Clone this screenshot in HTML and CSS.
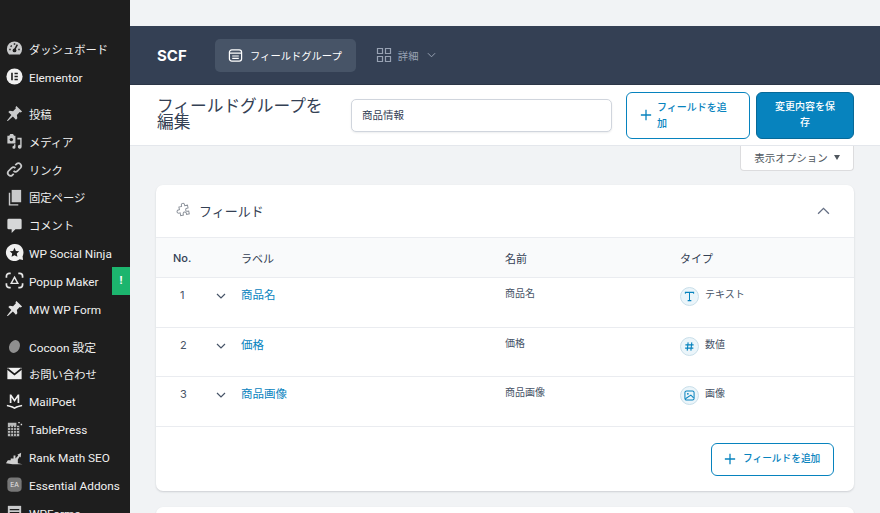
FILE: index.html
```html
<!DOCTYPE html>
<html lang="ja">
<head>
<meta charset="utf-8">
<title>フィールドグループを編集</title>
<link rel="stylesheet" href="styles.css">
</head>
<body>
<div class="app">
  <aside class="sidebar">
    <ul class="menu">
      <li class="item jp"><svg class="mi" viewBox="0 0 20 20"><path d="M10 2.500a8 8 0 0 0-8 8c0 2.200.9 4.200 2.300 5.700h11.400A8 8 0 0 0 18 10.500a8 8 0 0 0-8-8z" fill="#c9cacb"/><path d="M10 11.500 13 6M4.500 11h1.500M14 11h1.500M6 7l1 1M10 4.500V6" stroke="#1e1e1e" stroke-width="1.600"/><circle cx="10" cy="12" r="2" fill="#1e1e1e"/></svg><span>ダッシュボード</span></li>
      <li class="item"><svg class="mi" viewBox="0 0 20 20"><circle cx="10" cy="10" r="8.500" fill="#f0f0f0"/><path d="M6.500 6h1.700v8H6.500zM10 6h3.500v1.600H10zM10 9.200h3.500v1.600H10zM10 12.400h3.500V14H10z" fill="#1e1e1e"/></svg><span>Elementor</span></li>
      <li class="item sep jp"><svg class="mi" viewBox="0 0 20 20"><path d="M12 2l6 6-1.500 1-1-.5-3 3 .5 3.500-1.500 1.500-3.200-3.300L3 18l-1-.5 4.700-5.800L3.500 8.500 5 7l3.500.5 3-3-.5-1z" fill="#c9cacb"/></svg><span>投稿</span></li>
      <li class="item jp"><svg class="mi" viewBox="0 0 20 20"><path d="M2.500 4h2l1-2h3l1 2h1.500v8h-8.500z" fill="#c9cacb"/><circle cx="6.700" cy="8" r="1.800" fill="#1e1e1e"/><path d="M13 6h4.500v9.500a2 2 0 1 1-1.500-1.900V8H13z M11 13v3a1.600 1.600 0 1 1-1.500-1.600V13z" fill="#c9cacb"/></svg><span>メディア</span></li>
      <li class="item jp"><svg class="mi" viewBox="0 0 20 20"><path d="M9 11.500a3 3 0 0 0 4.200 0l3.300-3.300a3 3 0 0 0-4.200-4.200L10.800 5.500M11 8.500a3 3 0 0 0-4.200 0L3.500 11.800a3 3 0 0 0 4.200 4.200l1.500-1.500" fill="none" stroke="#c9cacb" stroke-width="1.800"/></svg><span>リンク</span></li>
      <li class="item jp"><svg class="mi" viewBox="0 0 20 20"><path d="M7 2h10v13H7z" fill="#c9cacb"/><path d="M4 5h1.500v12H14v1.500H4z" fill="#c9cacb"/></svg><span>固定ページ</span></li>
      <li class="item jp"><svg class="mi" viewBox="0 0 20 20"><path d="M4 3h12a1.500 1.500 0 0 1 1.500 1.500v8A1.500 1.500 0 0 1 16 14h-5l-4 4v-4H4a1.500 1.500 0 0 1-1.500-1.500v-8A1.500 1.500 0 0 1 4 3z" fill="#d6d7d8"/></svg><span>コメント</span></li>
      <li class="item"><svg class="mi" viewBox="0 0 20 20"><path d="M10 1a9 9 0 1 0 5.500 16.100L19 18l-.5-4A9 9 0 0 0 10 1z" fill="#f0f0f0"/><path d="M10 5l1.500 3.300 3.500.4-2.600 2.400.7 3.500L10 13l-3.100 1.600.7-3.500L5 8.700l3.500-.4z" fill="#1e1e1e"/></svg><span>WP Social Ninja</span></li>
      <li class="item"><svg class="mi" viewBox="0 0 20 20"><path d="M6 2.500H4.500a3 3 0 0 0-3 3V7M14 2.500h1.500a3 3 0 0 1 3 3V7M6 17.500H4.500a3 3 0 0 1-3-3V13M14 17.500h1.500a3 3 0 0 0 3-3V13" fill="none" stroke="#e8e8e8" stroke-width="1.800"/><path d="M10 6.500l3.500 6.500H6.500z" fill="none" stroke="#e8e8e8" stroke-width="1.500"/></svg><span>Popup Maker</span><b class="badge">!</b></li>
      <li class="item"><svg class="mi" viewBox="0 0 20 20"><path d="M12 2l6 6-1.500 1-1-.5-3 3 .5 3.500-1.500 1.500-3.200-3.300L3 18l-1-.5 4.700-5.800L3.500 8.500 5 7l3.500.5 3-3-.5-1z" fill="#e2e2e2"/></svg><span>MW WP Form</span></li>
      <li class="item sep"><svg class="mi" viewBox="0 0 20 20"><ellipse cx="10" cy="11" rx="5.500" ry="7" transform="rotate(25 10 11)" fill="#8f8f8f"/></svg><span>Cocoon 設定</span></li>
      <li class="item jp"><svg class="mi" viewBox="0 0 20 20"><path d="M2.500 4h15v12h-15z" fill="#f0f0f0"/><path d="M2.500 5l7.500 6 7.500-6" fill="none" stroke="#1e1e1e" stroke-width="1.800"/></svg><span>お問い合わせ</span></li>
      <li class="item"><svg class="mi" viewBox="0 0 20 20"><path d="M5 11.500V2.500h1.600L10 7.500l3.400-5H15v9h-1.800V5.800L10 10.500 6.800 5.800v5.700zM2 13.500c3 .5 5.500 1.200 8 2.500 2.500-1.300 5-2 8-2.500v1.500c-3 .5-5 1.200-8 3-3-1.800-5-2.500-8-3z" fill="#f0f0f0"/></svg><span>MailPoet</span></li>
      <li class="item"><svg class="mi" viewBox="0 0 20 20"><path d="M3 3h9v3h3v11H3z" fill="#b9baba"/><path d="M3 8h12M3 11h12M3 14h12M6 6v11M9 6v11M12 6v11" stroke="#1e1e1e" stroke-width=".9"/><path d="M14 2h1.500v1.500H14zM16.500 4H18v1.500h-1.500z" fill="#e2e2e2"/></svg><span>TablePress</span></li>
      <li class="item"><svg class="mi" viewBox="0 0 20 20"><path d="M1 16l2-3h3v-2h3V8h2v3l3-3-1-1 4-2-.500 5-1-1-2 3v4l5 1H8z" fill="#d0d0d0"/></svg><span>Rank Math SEO</span></li>
      <li class="item"><svg class="mi" viewBox="0 0 20 20"><rect x="2.500" y="2.500" width="15" height="15" rx="4" fill="#777"/><text x="10" y="13" text-anchor="middle" class="ea-text">EA</text></svg><span>Essential Addons</span></li>
      <li class="item"><svg class="mi" viewBox="0 0 20 20"><path d="M3 3h14v15H3z" fill="#c9cacb"/><path d="M5 7h10M5 10h10M5 13h10" stroke="#1e1e1e" stroke-width="1.200"/></svg><span>WPForms</span></li>
    </ul>
  </aside>

  <main class="main">
    <div class="adminbar-gap"></div>
    <nav class="topnav">
      <strong class="brand">SCF</strong>
      <a class="tab active"><svg class="tab-icon" viewBox="0 0 16 16"><rect x="1.500" y="2" width="13" height="12" rx="2.500" fill="none" stroke="currentColor" stroke-width="1.300"/><path d="M1.500 5.500h13M4.500 8.500h7M4.500 11h7" stroke="currentColor" stroke-width="1.200"/></svg>フィールドグループ</a>
      <a class="tab"><svg class="tab-icon large" viewBox="0 0 16 16"><path d="M1.500 1.500h5v5h-5zM9.500 1.500h5v5h-5zM1.500 9.500h5v5h-5zM9.500 9.500h5v5h-5z" fill="none" stroke="currentColor" stroke-width="1.200"/></svg>詳細<svg class="tab-caret" viewBox="0 0 10 6"><path d="M1 1l4 4 4-4" fill="none" stroke="currentColor" stroke-width="1.100"/></svg></a>
    </nav>

    <header class="titlebar">
      <h1 class="page-title">フィールドグループを編集</h1>
      <input class="title-input" type="text" value="商品情報">
      <a class="btn btn-outline header-add"><svg class="plus" viewBox="0 0 14 14"><path d="M7 1v12M1 7h12" stroke="currentColor" stroke-width="1.500"/></svg><span>フィールドを追加</span></a>
      <a class="btn btn-primary">変更内容を保存</a>
    </header>

    <div class="screen-options-row">
      <a class="screen-options">表示オプション<i class="tri"></i></a>
    </div>

    <section class="card">
      <div class="card-head">
        <svg class="puzzle" viewBox="0 0 20 20"><path d="M8 3.500a2 2 0 1 1 4 0V5h3.500v3.500H14a2 2 0 1 0 0 4h1.500V16H12v-1.500a2 2 0 1 0-4 0V16H4.500v-3.500H3a2 2 0 1 1 0-4h1.500V5H8z" transform="rotate(-12 10 10)" fill="none" stroke="#8a9099" stroke-width="1.200"/></svg>
        <h2 class="card-title">フィールド</h2>
        <svg class="collapse" viewBox="0 0 12 8"><path d="M1 7l5-5 5 5" fill="none" stroke="#667085" stroke-width="1.200"/></svg>
      </div>
      <div class="row row-head">
        <div class="c-no strong">No.</div><div class="c-arrow"></div><div class="c-label">ラベル</div><div class="c-name">名前</div><div class="c-type">タイプ</div>
      </div>
      <div class="row field">
        <div class="c-no">1</div>
        <div class="c-arrow"><svg class="chev" viewBox="0 0 10 6"><path d="M1 1l4 4 4-4" fill="none" stroke="currentColor" stroke-width="1.200"/></svg></div>
        <div class="c-label"><a class="link">商品名</a></div>
        <div class="c-name small">商品名</div>
        <div class="c-type small"><span class="type-ico"><svg viewBox="0 0 12 12"><path d="M1.500 3V1.500h9V3M6 1.500v9M4 10.500h4" fill="none" stroke="currentColor" stroke-width="1.100"/></svg></span>テキスト</div>
      </div>
      <div class="row field">
        <div class="c-no">2</div>
        <div class="c-arrow"><svg class="chev" viewBox="0 0 10 6"><path d="M1 1l4 4 4-4" fill="none" stroke="currentColor" stroke-width="1.200"/></svg></div>
        <div class="c-label"><a class="link">価格</a></div>
        <div class="c-name small">価格</div>
        <div class="c-type small"><span class="type-ico"><svg viewBox="0 0 12 12"><path d="M4.500 1.500L3.500 10.500M8.500 1.500L7.500 10.500M1.500 4.200h9M1.200 7.800h9" fill="none" stroke="currentColor" stroke-width="1.200"/></svg></span>数値</div>
      </div>
      <div class="row field">
        <div class="c-no">3</div>
        <div class="c-arrow"><svg class="chev" viewBox="0 0 10 6"><path d="M1 1l4 4 4-4" fill="none" stroke="currentColor" stroke-width="1.200"/></svg></div>
        <div class="c-label"><a class="link">商品画像</a></div>
        <div class="c-name small">商品画像</div>
        <div class="c-type small"><span class="type-ico"><svg viewBox="0 0 12 12"><rect x="1" y="1" width="10" height="10" rx="1.800" fill="none" stroke="currentColor" stroke-width="1.100"/><circle cx="4.200" cy="4.200" r="1" fill="currentColor"/><path d="M1.500 9.500L7.500 5.500l3 3" fill="none" stroke="currentColor" stroke-width="1.100"/></svg></span>画像</div>
      </div>
      <div class="card-foot">
        <a class="btn btn-outline foot-add"><svg class="plus" viewBox="0 0 14 14"><path d="M7 1v12M1 7h12" stroke="currentColor" stroke-width="1.500"/></svg>フィールドを追加</a>
      </div>
    </section>
    <section class="card next"></section>
  </main>
</div>
</body>
</html>
```
FILE: styles.css
```css
* { box-sizing: border-box; }
html, body { margin: 0; height: 100%; overflow: hidden; }
body {
  font-family: Inter, "Noto Sans CJK JP", sans-serif;
  background: #f1f3f5;
  color: #344054;
}
.app { display: flex; height: 513px; overflow: hidden; }

.sidebar { width: 130px; flex: none; background: #1e1e1e; color: #f0f0f0; padding-top: 35px; overflow: hidden; }
.menu { list-style: none; margin: 0; padding: 0; }
.item {
  height: 27.800px;
  display: flex;
  align-items: center;
  gap: 5px;
  padding-left: 5px;
  font-family: Roboto, "Noto Sans CJK JP", sans-serif;
  font-size: 11.800px;
  font-weight: 400;
  white-space: nowrap;
  position: relative;
}
.item span { padding-top: 2px; }
.item.jp { font-size: 11.300px; }
.item.jp span { padding-top: 0; }
.item.sep { margin-top: 9.500px; }
.mi { width: 19px; height: 19px; flex: none; }
.ea-text { font-size: 7px; fill: #e8e8e8; font-family: Inter, sans-serif; }
.item .badge {
  position: absolute;
  right: 0;
  top: 0;
  width: 18px;
  height: 28px;
  background: #1cb56e;
  color: #fff;
  font-size: 11px;
  display: flex;
  align-items: center;
  justify-content: center;
}

.main { flex: 1; min-width: 0; }
.adminbar-gap { height: 26px; background: #f1f3f5; }

.topnav {
  height: 59px;
  background: #344054;
  border-bottom: 1px solid #2c3647;
  display: flex;
  align-items: center;
  padding-left: 27px;
  color: #98a2b3;
}
.brand { color: #fff; font-size: 15px; font-weight: 700; width: 58px; }
.tab {
  height: 33px;
  display: flex;
  align-items: center;
  gap: 7px;
  font-size: 10.300px;
  padding: 0 14px 0 13px;
  border-radius: 5px;
  margin-right: 7px;
}
.tab.active { background: #475467; color: #fff; }
.tab-icon { width: 15px; height: 15px; }
.tab-icon.large { width: 16px; height: 16px; margin-right: -1px; }
.tab-caret { width: 9px; height: 6px; margin-left: 2px; }

.titlebar {
  height: 61px;
  background: #fff;
  border-bottom: 1px solid #e4e7ec;
  display: flex;
  align-items: center;
  padding: 0 26px 0 27px;
}
.page-title {
  margin: 0;
  width: 194px;
  padding-right: 20px;
  flex: none;
  font-size: 16.700px;
  line-height: 16px;
  font-weight: 400;
  color: #344054;
  position: relative;
  top: -1px;
}
.title-input {
  width: 261px;
  height: 33px;
  flex: none;
  border: 1px solid #d0d5dd;
  border-radius: 5px;
  padding: 0 10px 2px;
  font: 400 10.500px Inter, "Noto Sans CJK JP", sans-serif;
  color: #344054;
  background: #fff;
  box-shadow: 0 1px 2px rgba(16, 24, 40, .08);
}
.btn { display: flex; align-items: center; border-radius: 6px; font-size: 10px; line-height: 16px; font-weight: 500; }
.btn-outline { border: 1px solid #0783be; color: #0783be; background: #fff; }
.btn-primary { background: #0783be; border: 1px solid #066998; color: #fff; width: 98px; height: 47px; padding: 0 14px 2px; text-align: center; margin-left: 6px; }
.header-add { width: 124px; height: 47px; margin-left: 14px; padding: 0 14px 0 13px; gap: 5px; flex: none; }
.plus { width: 12px; height: 12px; flex: none; }

.screen-options-row { display: flex; justify-content: flex-end; padding-right: 26px; height: 39px; }
.screen-options {
  width: 114px;
  height: 25px;
  padding-bottom: 2px;
  background: #fff;
  border: 1px solid #dcdcde;
  border-top: 0;
  border-radius: 0 0 4px 4px;
  font-size: 10.500px;
  color: #50575e;
  display: flex;
  align-items: center;
  justify-content: center;
  gap: 6px;
}
.tri { width: 0; height: 0; border-left: 3.500px solid transparent; border-right: 3.500px solid transparent; border-top: 5px solid #50575e; }

.card {
  margin: 0 26px 16px;
  background: #fff;
  border-radius: 7px;
  box-shadow: 0 1px 2px rgba(16, 24, 40, .16);
  overflow: hidden;
}
.card.next { height: 40px; }
.card-head { height: 52px; display: flex; align-items: center; padding: 0 24px 2px 20px; }
.puzzle { width: 16px; height: 16px; flex: none; }
.card-title { margin: 0 0 0 7px; flex: 1; font-size: 13px; font-weight: 400; color: #344054; }
.collapse { width: 13px; height: 9px; }

.row { display: flex; border-top: 1px solid #eaecf0; }
.row-head { height: 40px; align-items: center; background: #f9fafb; font-size: 11px; color: #344054; }
.strong { font-weight: 500; }
.c-no { width: 50px; padding-left: 17px; flex: none; }
.field .c-no { padding-left: 24px; }
.c-arrow { width: 35px; flex: none; padding-left: 10px; }
.c-label { width: 264px; flex: none; }
.c-name { width: 175px; flex: none; }
.c-type { flex: 1; }
.field { height: 49.700px; padding-top: 8px; font-size: 11px; color: #475467; line-height: 16px; }
.field .c-no { line-height: 18px; }
.small { font-size: 10px; line-height: 16px; }
.field .c-name { margin-top: -1px; }
.chev { width: 10px; height: 6px; margin-top: 7px; display: block; color: #475467; }
.link { color: #0783be; font-size: 11.500px; line-height: 16px; margin-top: 1px; display: block; }
.field .c-type { display: flex; align-items: flex-start; gap: 6px; }
.type-ico {
  width: 19px;
  height: 19px;
  margin-top: 1px;
  border-radius: 50%;
  background: #ebf5fa;
  border: 1px solid #c9dfea;
  color: #0783be;
  display: flex;
  align-items: center;
  justify-content: center;
  flex: none;
}
.type-ico svg { width: 11px; height: 11px; }

.card-foot { border-top: 1px solid #eaecf0; height: 65px; display: flex; justify-content: flex-end; align-items: center; padding-right: 20px; }
.foot-add { height: 33px; width: 123px; padding: 0 12px; gap: 7px; white-space: nowrap; font-size: 9.700px; }
```
